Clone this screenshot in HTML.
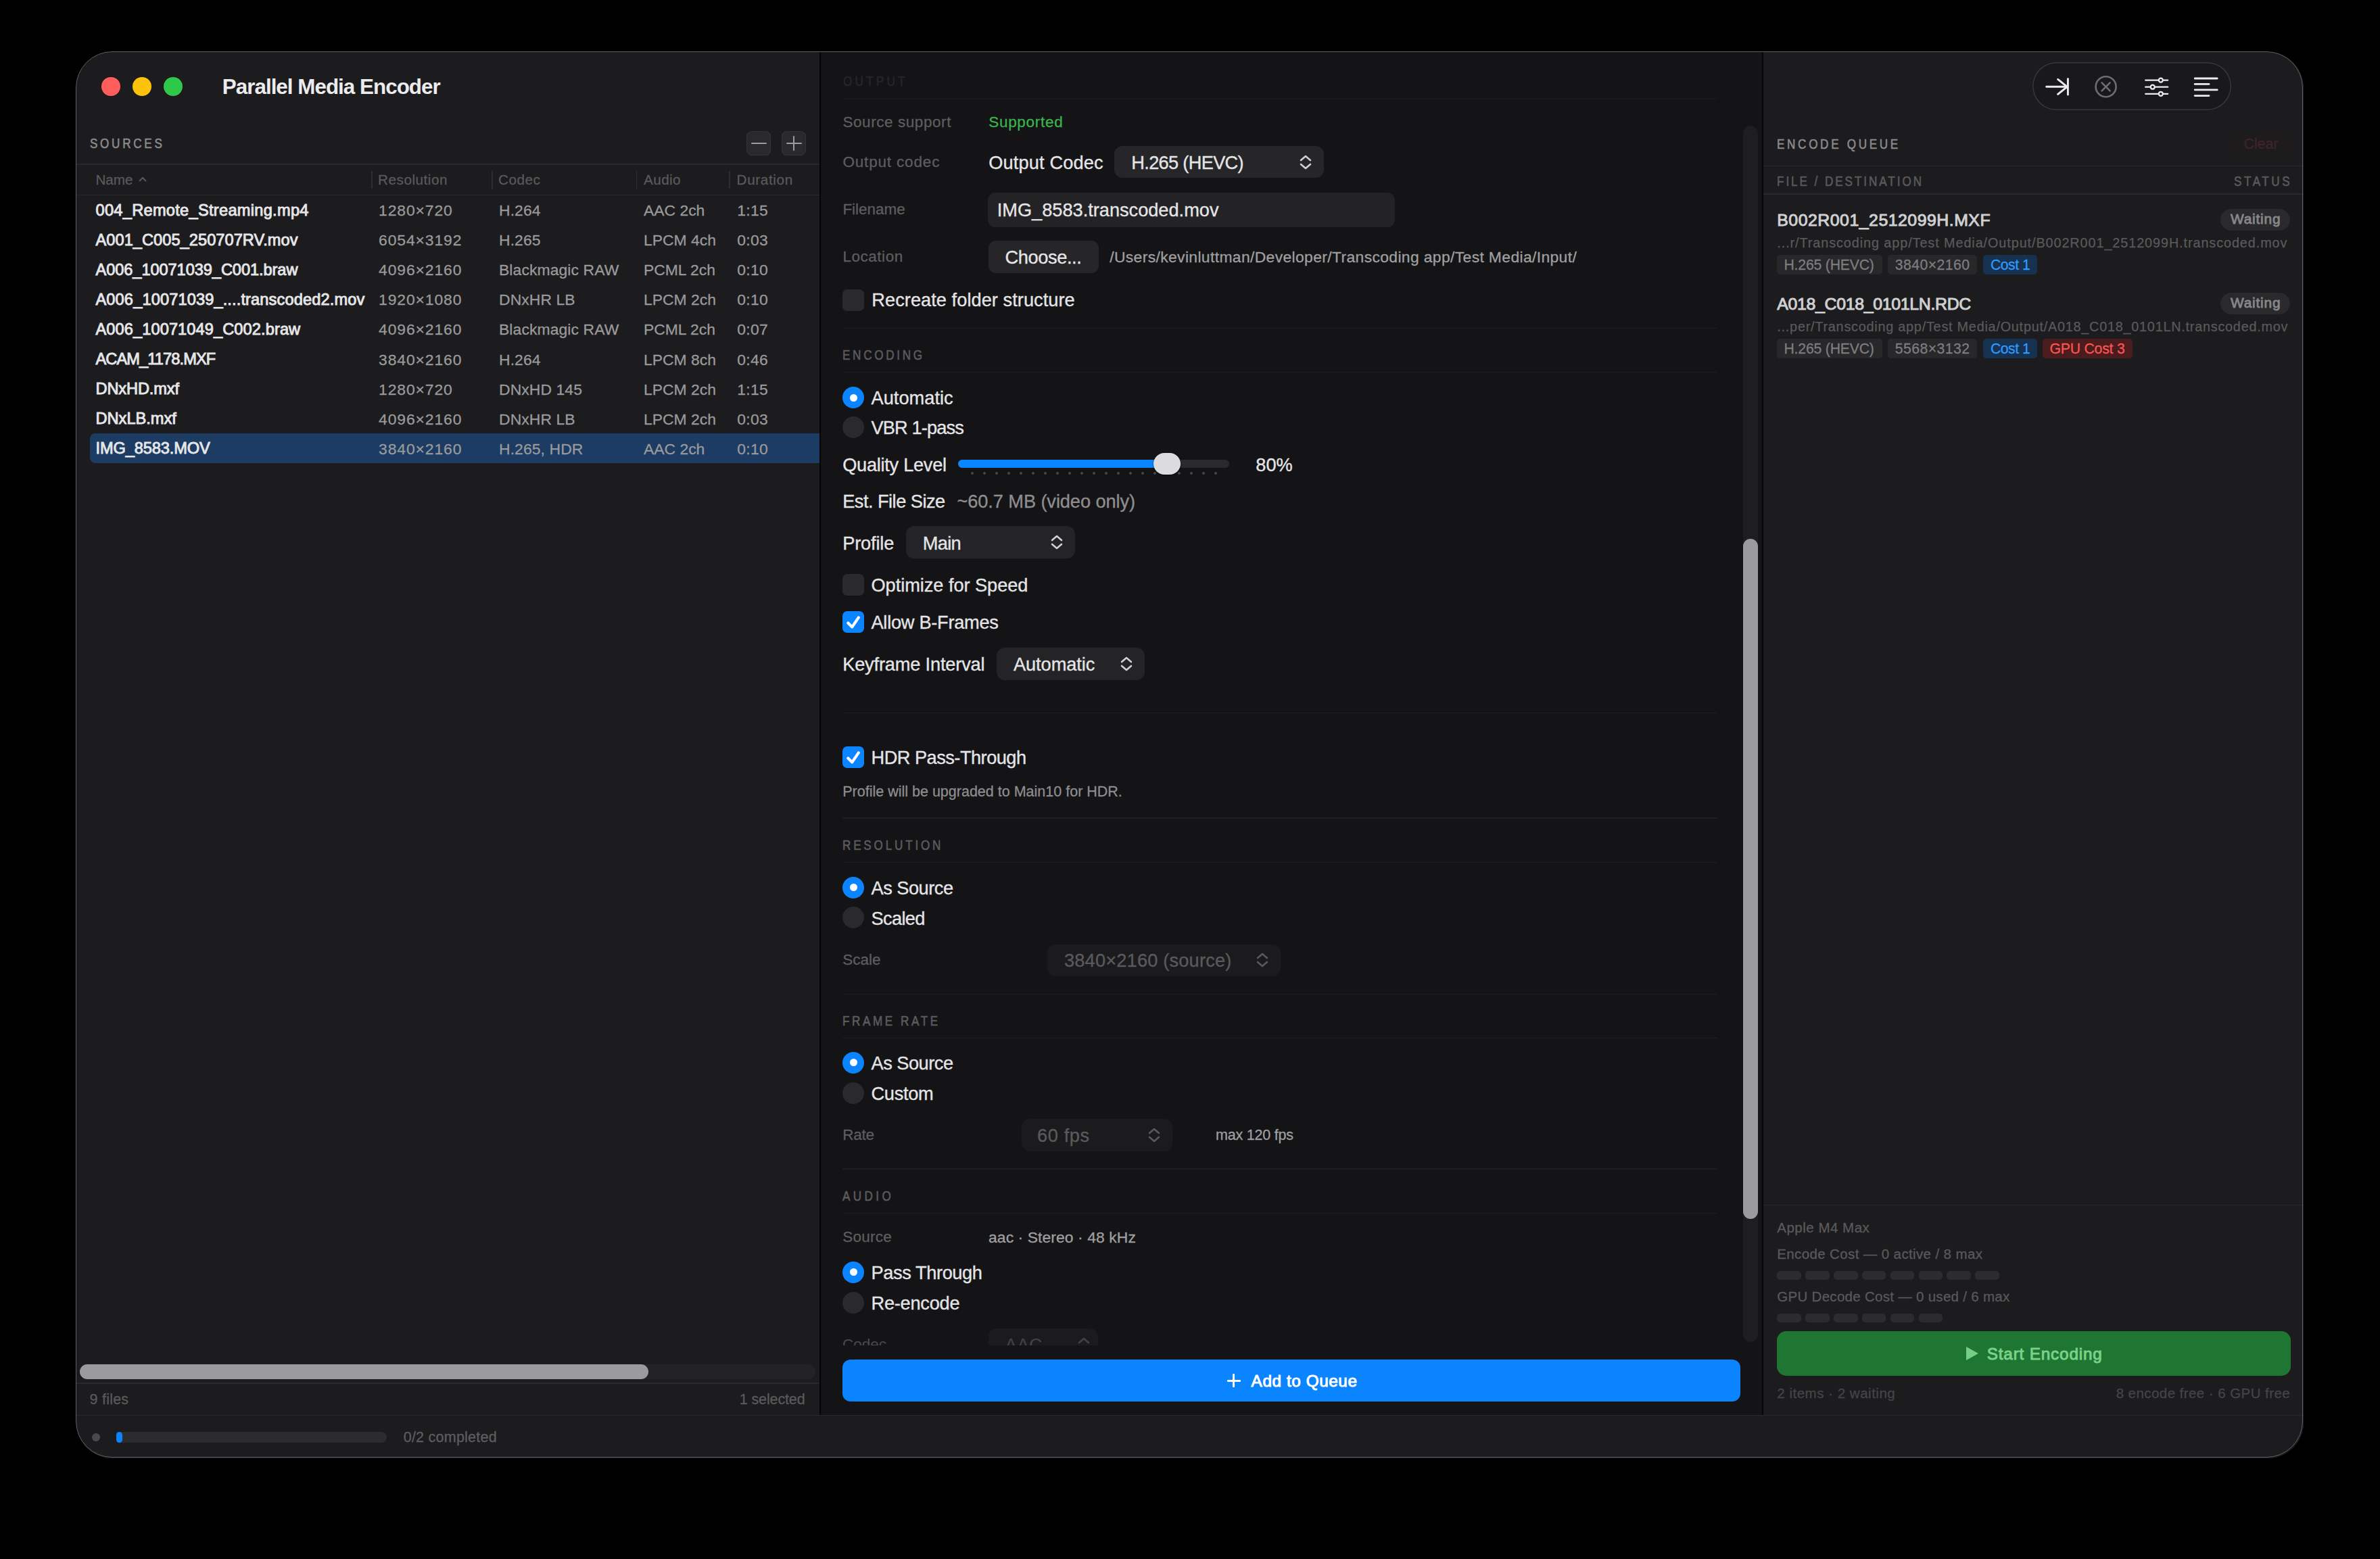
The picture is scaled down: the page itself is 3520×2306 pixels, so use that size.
<!DOCTYPE html><html><head><meta charset="utf-8"><style>
html,body{margin:0;padding:0;background:#000;}
body{width:3520px;height:2306px;position:relative;overflow:hidden;font-family:"Liberation Sans",sans-serif;}
.t{position:absolute;line-height:1;white-space:nowrap;}
.r{position:absolute;}
#win{position:absolute;left:113px;top:77px;width:3294px;height:2080px;border-radius:53px;overflow:hidden;background:#1c1c1e;}
#inner{position:absolute;left:-113px;top:-77px;width:3520px;height:2306px;}
svg{position:absolute;overflow:visible;}
</style></head><body>
<div id="win"><div id="inner">
<div class="r" style="left:113.0px;top:77.0px;width:1099.0px;height:2016.0px;background:#1c1c1e;"></div>
<div class="r" style="left:1212.0px;top:77.0px;width:2.0px;height:2016.0px;background:#050505;"></div>
<div class="r" style="left:1214.0px;top:77.0px;width:1392.0px;height:2016.0px;background:#141416;"></div>
<div class="r" style="left:2606.0px;top:77.0px;width:2.0px;height:2016.0px;background:#050505;"></div>
<div class="r" style="left:2608.0px;top:77.0px;width:799.0px;height:2016.0px;background:#1c1c1e;"></div>
<div class="r" style="left:113.0px;top:2093.0px;width:3294.0px;height:64.0px;background:#1c1c1e;"></div>
<div class="r" style="left:113.0px;top:2092.8px;width:3294.0px;height:1.5px;background:#29292b;"></div>
<div class="r" style="left:150.0px;top:114.0px;width:28.0px;height:28.0px;background:#ff5f5c;border-radius:14px;"></div>
<div class="r" style="left:196.0px;top:114.0px;width:28.0px;height:28.0px;background:#fdc20c;border-radius:14px;"></div>
<div class="r" style="left:242.0px;top:114.0px;width:28.0px;height:28.0px;background:#30c84a;border-radius:14px;"></div>
<div class="t" style="left:328.8px;top:113.0px;font-size:31.4px;color:#ececee;font-weight:bold;letter-spacing:-0.989px;">Parallel Media Encoder</div>
<div class="t" style="left:132.7px;top:202.3px;font-size:20.8px;color:#8b8b8d;-webkit-text-stroke:0.61px #8b8b8d;letter-spacing:4.563px;transform:scaleX(0.82);transform-origin:left center;">SOURCES</div>
<div class="r" style="left:1104.0px;top:194.4px;width:36.0px;height:35.3px;background:#2a2a2c;border-radius:8px;box-shadow:inset 0 0 0 1px #333336;"></div>
<div class="r" style="left:1156.0px;top:194.4px;width:36.0px;height:35.3px;background:#2a2a2c;border-radius:8px;box-shadow:inset 0 0 0 1px #333336;"></div>
<div class="r" style="left:1111.0px;top:211.0px;width:22.5px;height:2.2px;background:#9c9c9e;border-radius:1px;"></div>
<div class="r" style="left:1163.0px;top:211.0px;width:22.5px;height:2.2px;background:#9c9c9e;border-radius:1px;"></div>
<div class="r" style="left:1173.2px;top:200.8px;width:2.2px;height:22.5px;background:#9c9c9e;border-radius:1px;"></div>
<div class="r" style="left:113.0px;top:242.2px;width:1099.0px;height:1.5px;background:#29292b;"></div>
<div class="t" style="left:141.5px;top:256.4px;font-size:20.7px;color:#5a5a5c;-webkit-text-stroke:0.26px #5a5a5c;letter-spacing:-0.071px;">Name</div>
<svg style="left:204px;top:260px" width="14" height="10"><polyline points="2,8 7,3 12,8" fill="none" stroke="#5a5a5c" stroke-width="2"/></svg>
<div class="t" style="left:559.0px;top:256.4px;font-size:20.7px;color:#5a5a5c;-webkit-text-stroke:0.26px #5a5a5c;letter-spacing:0.533px;">Resolution</div>
<div class="t" style="left:737.0px;top:256.4px;font-size:20.7px;color:#5a5a5c;-webkit-text-stroke:0.26px #5a5a5c;letter-spacing:0.542px;">Codec</div>
<div class="t" style="left:952.0px;top:256.4px;font-size:20.7px;color:#5a5a5c;-webkit-text-stroke:0.26px #5a5a5c;letter-spacing:0.415px;">Audio</div>
<div class="t" style="left:1089.6px;top:256.4px;font-size:20.7px;color:#5a5a5c;-webkit-text-stroke:0.26px #5a5a5c;letter-spacing:0.623px;">Duration</div>
<div class="r" style="left:549.2px;top:252.6px;width:1.5px;height:26.4px;background:#2e2e30;"></div>
<div class="r" style="left:727.2px;top:252.6px;width:1.5px;height:26.4px;background:#2e2e30;"></div>
<div class="r" style="left:940.9px;top:252.6px;width:1.5px;height:26.4px;background:#2e2e30;"></div>
<div class="r" style="left:1078.2px;top:252.6px;width:1.5px;height:26.4px;background:#2e2e30;"></div>
<div class="r" style="left:113.0px;top:287.6px;width:1099.0px;height:1.5px;background:#29292b;"></div>
<div class="t" style="left:141.5px;top:300.1px;font-size:23.6px;color:#e6e6e8;-webkit-text-stroke:0.93px #e6e6e8;letter-spacing:0.293px;">004_Remote_Streaming.mp4</div>
<div class="t" style="left:560.0px;top:300.4px;font-size:22.9px;color:#9a9a9c;-webkit-text-stroke:0.29px #9a9a9c;letter-spacing:0.9px;">1280×720</div>
<div class="t" style="left:738.0px;top:300.4px;font-size:22.9px;color:#9a9a9c;-webkit-text-stroke:0.29px #9a9a9c;letter-spacing:0.1px;">H.264</div>
<div class="t" style="left:952.0px;top:300.4px;font-size:22.9px;color:#9a9a9c;-webkit-text-stroke:0.29px #9a9a9c;">AAC 2ch</div>
<div class="t" style="left:1090.3px;top:300.4px;font-size:22.9px;color:#9a9a9c;-webkit-text-stroke:0.29px #9a9a9c;letter-spacing:0.3px;">1:15</div>
<div class="t" style="left:141.5px;top:344.1px;font-size:23.6px;color:#e6e6e8;-webkit-text-stroke:0.93px #e6e6e8;letter-spacing:0.055px;">A001_C005_250707RV.mov</div>
<div class="t" style="left:560.0px;top:344.4px;font-size:22.9px;color:#9a9a9c;-webkit-text-stroke:0.29px #9a9a9c;letter-spacing:0.9px;">6054×3192</div>
<div class="t" style="left:738.0px;top:344.4px;font-size:22.9px;color:#9a9a9c;-webkit-text-stroke:0.29px #9a9a9c;letter-spacing:0.1px;">H.265</div>
<div class="t" style="left:952.0px;top:344.4px;font-size:22.9px;color:#9a9a9c;-webkit-text-stroke:0.29px #9a9a9c;">LPCM 4ch</div>
<div class="t" style="left:1090.3px;top:344.4px;font-size:22.9px;color:#9a9a9c;-webkit-text-stroke:0.29px #9a9a9c;letter-spacing:0.3px;">0:03</div>
<div class="t" style="left:141.5px;top:388.1px;font-size:23.6px;color:#e6e6e8;-webkit-text-stroke:0.93px #e6e6e8;letter-spacing:-0.067px;">A006_10071039_C001.braw</div>
<div class="t" style="left:560.0px;top:388.4px;font-size:22.9px;color:#9a9a9c;-webkit-text-stroke:0.29px #9a9a9c;letter-spacing:0.9px;">4096×2160</div>
<div class="t" style="left:738.0px;top:388.4px;font-size:22.9px;color:#9a9a9c;-webkit-text-stroke:0.29px #9a9a9c;letter-spacing:0.1px;">Blackmagic RAW</div>
<div class="t" style="left:952.0px;top:388.4px;font-size:22.9px;color:#9a9a9c;-webkit-text-stroke:0.29px #9a9a9c;">PCML 2ch</div>
<div class="t" style="left:1090.3px;top:388.4px;font-size:22.9px;color:#9a9a9c;-webkit-text-stroke:0.29px #9a9a9c;letter-spacing:0.3px;">0:10</div>
<div class="t" style="left:141.5px;top:432.1px;font-size:23.6px;color:#e6e6e8;-webkit-text-stroke:0.93px #e6e6e8;letter-spacing:0.131px;">A006_10071039_....transcoded2.mov</div>
<div class="t" style="left:560.0px;top:432.4px;font-size:22.9px;color:#9a9a9c;-webkit-text-stroke:0.29px #9a9a9c;letter-spacing:0.9px;">1920×1080</div>
<div class="t" style="left:738.0px;top:432.4px;font-size:22.9px;color:#9a9a9c;-webkit-text-stroke:0.29px #9a9a9c;letter-spacing:0.1px;">DNxHR LB</div>
<div class="t" style="left:952.0px;top:432.4px;font-size:22.9px;color:#9a9a9c;-webkit-text-stroke:0.29px #9a9a9c;">LPCM 2ch</div>
<div class="t" style="left:1090.3px;top:432.4px;font-size:22.9px;color:#9a9a9c;-webkit-text-stroke:0.29px #9a9a9c;letter-spacing:0.3px;">0:10</div>
<div class="t" style="left:141.5px;top:476.1px;font-size:23.6px;color:#e6e6e8;-webkit-text-stroke:0.93px #e6e6e8;letter-spacing:0.101px;">A006_10071049_C002.braw</div>
<div class="t" style="left:560.0px;top:476.4px;font-size:22.9px;color:#9a9a9c;-webkit-text-stroke:0.29px #9a9a9c;letter-spacing:0.9px;">4096×2160</div>
<div class="t" style="left:738.0px;top:476.4px;font-size:22.9px;color:#9a9a9c;-webkit-text-stroke:0.29px #9a9a9c;letter-spacing:0.1px;">Blackmagic RAW</div>
<div class="t" style="left:952.0px;top:476.4px;font-size:22.9px;color:#9a9a9c;-webkit-text-stroke:0.29px #9a9a9c;">PCML 2ch</div>
<div class="t" style="left:1090.3px;top:476.4px;font-size:22.9px;color:#9a9a9c;-webkit-text-stroke:0.29px #9a9a9c;letter-spacing:0.3px;">0:07</div>
<div class="t" style="left:141.5px;top:520.1px;font-size:23.6px;color:#e6e6e8;-webkit-text-stroke:0.93px #e6e6e8;letter-spacing:-0.894px;">ACAM_1178.MXF</div>
<div class="t" style="left:560.0px;top:520.5px;font-size:22.9px;color:#9a9a9c;-webkit-text-stroke:0.29px #9a9a9c;letter-spacing:0.9px;">3840×2160</div>
<div class="t" style="left:738.0px;top:520.5px;font-size:22.9px;color:#9a9a9c;-webkit-text-stroke:0.29px #9a9a9c;letter-spacing:0.1px;">H.264</div>
<div class="t" style="left:952.0px;top:520.5px;font-size:22.9px;color:#9a9a9c;-webkit-text-stroke:0.29px #9a9a9c;">LPCM 8ch</div>
<div class="t" style="left:1090.3px;top:520.5px;font-size:22.9px;color:#9a9a9c;-webkit-text-stroke:0.29px #9a9a9c;letter-spacing:0.3px;">0:46</div>
<div class="t" style="left:141.5px;top:564.1px;font-size:23.6px;color:#e6e6e8;-webkit-text-stroke:0.93px #e6e6e8;letter-spacing:-0.118px;">DNxHD.mxf</div>
<div class="t" style="left:560.0px;top:564.5px;font-size:22.9px;color:#9a9a9c;-webkit-text-stroke:0.29px #9a9a9c;letter-spacing:0.9px;">1280×720</div>
<div class="t" style="left:738.0px;top:564.5px;font-size:22.9px;color:#9a9a9c;-webkit-text-stroke:0.29px #9a9a9c;letter-spacing:0.1px;">DNxHD 145</div>
<div class="t" style="left:952.0px;top:564.5px;font-size:22.9px;color:#9a9a9c;-webkit-text-stroke:0.29px #9a9a9c;">LPCM 2ch</div>
<div class="t" style="left:1090.3px;top:564.5px;font-size:22.9px;color:#9a9a9c;-webkit-text-stroke:0.29px #9a9a9c;letter-spacing:0.3px;">1:15</div>
<div class="t" style="left:141.5px;top:608.1px;font-size:23.6px;color:#e6e6e8;-webkit-text-stroke:0.93px #e6e6e8;letter-spacing:0.01px;">DNxLB.mxf</div>
<div class="t" style="left:560.0px;top:608.5px;font-size:22.9px;color:#9a9a9c;-webkit-text-stroke:0.29px #9a9a9c;letter-spacing:0.9px;">4096×2160</div>
<div class="t" style="left:738.0px;top:608.5px;font-size:22.9px;color:#9a9a9c;-webkit-text-stroke:0.29px #9a9a9c;letter-spacing:0.1px;">DNxHR LB</div>
<div class="t" style="left:952.0px;top:608.5px;font-size:22.9px;color:#9a9a9c;-webkit-text-stroke:0.29px #9a9a9c;">LPCM 2ch</div>
<div class="t" style="left:1090.3px;top:608.5px;font-size:22.9px;color:#9a9a9c;-webkit-text-stroke:0.29px #9a9a9c;letter-spacing:0.3px;">0:03</div>
<div class="r" style="left:133.0px;top:641.3px;width:1079.0px;height:43.4px;background:#1c3c64;border-radius:8px;border-top-right-radius:0;border-bottom-right-radius:0;"></div>
<div class="t" style="left:141.5px;top:652.1px;font-size:23.6px;color:#e6e6e8;-webkit-text-stroke:0.93px #e6e6e8;letter-spacing:-0.109px;">IMG_8583.MOV</div>
<div class="t" style="left:560.0px;top:652.5px;font-size:22.9px;color:#9a9a9c;-webkit-text-stroke:0.29px #9a9a9c;letter-spacing:0.9px;">3840×2160</div>
<div class="t" style="left:738.0px;top:652.5px;font-size:22.9px;color:#9a9a9c;-webkit-text-stroke:0.29px #9a9a9c;letter-spacing:0.1px;">H.265, HDR</div>
<div class="t" style="left:952.0px;top:652.5px;font-size:22.9px;color:#9a9a9c;-webkit-text-stroke:0.29px #9a9a9c;">AAC 2ch</div>
<div class="t" style="left:1090.3px;top:652.5px;font-size:22.9px;color:#9a9a9c;-webkit-text-stroke:0.29px #9a9a9c;letter-spacing:0.3px;">0:10</div>
<div class="r" style="left:118.0px;top:2018.3px;width:1087.5px;height:21.6px;background:#232325;border-radius:11px;"></div>
<div class="r" style="left:118.0px;top:2018.3px;width:840.8px;height:21.6px;background:#9b9b9d;border-radius:11px;"></div>
<div class="r" style="left:113.0px;top:2045.2px;width:1099.0px;height:1.5px;background:#29292b;"></div>
<div class="t" style="left:132.6px;top:2059.9px;font-size:21.5px;color:#5a5a5c;-webkit-text-stroke:0.27px #5a5a5c;letter-spacing:0.223px;">9 files</div>
<div class="t" style="right:2329.5px;top:2059.9px;font-size:21.5px;color:#5a5a5c;-webkit-text-stroke:0.27px #5a5a5c;letter-spacing:-0.134px;">1 selected</div>
<div class="r" style="left:136.0px;top:2120.0px;width:12.0px;height:12.0px;background:#4a4a4c;border-radius:6px;"></div>
<div class="r" style="left:171.8px;top:2118.0px;width:400.0px;height:16.0px;background:#2c2c2e;border-radius:8px;"></div>
<div class="r" style="left:171.8px;top:2118.0px;width:9.2px;height:16.0px;background:#0a84ff;border-radius:8px;"></div>
<div class="t" style="left:596.7px;top:2115.9px;font-size:21.5px;color:#5e5e60;-webkit-text-stroke:0.27px #5e5e60;letter-spacing:0.246px;">0/2 completed</div>
<div class="t" style="left:1246.5px;top:110.3px;font-size:20.8px;color:#262628;-webkit-text-stroke:0.61px #262628;letter-spacing:5.216px;transform:scaleX(0.82);transform-origin:left center;">OUTPUT</div>
<div class="r" style="left:1246.0px;top:145.2px;width:1294.0px;height:1.5px;background:#19191b;"></div>
<div class="t" style="left:1246.4px;top:169.6px;font-size:22.5px;color:#5e5e60;-webkit-text-stroke:0.28px #5e5e60;letter-spacing:0.571px;">Source support</div>
<div class="t" style="left:1462.2px;top:169.6px;font-size:22.5px;color:#3ab54e;-webkit-text-stroke:0.28px #3ab54e;letter-spacing:0.71px;">Supported</div>
<div class="t" style="left:1246.4px;top:229.4px;font-size:22.5px;color:#5e5e60;-webkit-text-stroke:0.28px #5e5e60;letter-spacing:0.834px;">Output codec</div>
<div class="t" style="left:1462.2px;top:227.1px;font-size:27.2px;color:#e5e5e7;-webkit-text-stroke:0.34px #e5e5e7;letter-spacing:0.152px;">Output Codec</div>
<div class="r" style="left:1648.3px;top:216.2px;width:309.9px;height:47.2px;background:#262628;border-radius:12px;"></div>
<div class="t" style="left:1673.3px;top:227.1px;font-size:27.2px;color:#e5e5e7;-webkit-text-stroke:0.34px #e5e5e7;letter-spacing:-0.675px;">H.265 (HEVC)</div>
<svg style="left:1922.0px;top:228.0px" width="18" height="24"><polyline points="2,9 9.0,3 16,9" fill="none" stroke="#d0d0d2" stroke-width="2.6" stroke-linecap="round" stroke-linejoin="round"/><polyline points="2,15 9.0,21 16,15" fill="none" stroke="#d0d0d2" stroke-width="2.6" stroke-linecap="round" stroke-linejoin="round"/></svg>
<div class="t" style="left:1246.4px;top:299.4px;font-size:22.5px;color:#5e5e60;-webkit-text-stroke:0.28px #5e5e60;letter-spacing:-0.033px;">Filename</div>
<div class="r" style="left:1461.0px;top:285.0px;width:602.0px;height:50.7px;background:#232325;border-radius:11px;"></div>
<div class="t" style="left:1474.8px;top:297.1px;font-size:27.2px;color:#e5e5e7;-webkit-text-stroke:0.34px #e5e5e7;letter-spacing:-0.012px;">IMG_8583.transcoded.mov</div>
<div class="t" style="left:1246.4px;top:369.4px;font-size:22.5px;color:#5e5e60;-webkit-text-stroke:0.28px #5e5e60;letter-spacing:0.534px;">Location</div>
<div class="r" style="left:1462.0px;top:356.0px;width:162.6px;height:48.0px;background:#262628;border-radius:11px;"></div>
<div class="t" style="left:1486.4px;top:367.1px;font-size:27.2px;color:#e5e5e7;-webkit-text-stroke:0.34px #e5e5e7;letter-spacing:-0.364px;">Choose...</div>
<div class="t" style="left:1641.2px;top:369.2px;font-size:22.9px;color:#a0a0a2;-webkit-text-stroke:0.29px #a0a0a2;letter-spacing:0.358px;">/Users/kevinluttman/Developer/Transcoding app/Test Media/Input/</div>
<div class="r" style="left:1246.0px;top:427.5px;width:32.0px;height:32.0px;background:#2a2a2c;border-radius:7px;"></div>
<div class="t" style="left:1289.3px;top:430.1px;font-size:27.2px;color:#e5e5e7;-webkit-text-stroke:0.34px #e5e5e7;letter-spacing:0.05px;">Recreate folder structure</div>
<div class="r" style="left:1246.0px;top:484.8px;width:1294.0px;height:1.5px;background:#1e1e20;"></div>
<div class="t" style="left:1246.2px;top:515.0px;font-size:20.8px;color:#5c5c5e;-webkit-text-stroke:0.61px #5c5c5e;letter-spacing:4.544px;transform:scaleX(0.82);transform-origin:left center;">ENCODING</div>
<div class="r" style="left:1246.0px;top:549.6px;width:1294.0px;height:1.5px;background:#1e1e20;"></div>
<div class="r" style="left:1246.0px;top:572.0px;width:32.0px;height:32.0px;background:#0a84ff;border-radius:16px;"></div>
<div class="r" style="left:1256.5px;top:582.5px;width:11.0px;height:11.0px;background:#ffffff;border-radius:6px;"></div>
<div class="t" style="left:1288.5px;top:575.1px;font-size:27.2px;color:#e5e5e7;-webkit-text-stroke:0.34px #e5e5e7;letter-spacing:0.033px;">Automatic</div>
<div class="r" style="left:1246.0px;top:616.0px;width:32.0px;height:32.0px;background:#2a2a2c;border-radius:16px;"></div>
<div class="t" style="left:1288.5px;top:619.1px;font-size:27.2px;color:#e5e5e7;-webkit-text-stroke:0.34px #e5e5e7;letter-spacing:-0.858px;">VBR 1-pass</div>
<div class="t" style="left:1246.2px;top:673.7px;font-size:27.2px;color:#e5e5e7;-webkit-text-stroke:0.34px #e5e5e7;letter-spacing:-0.277px;">Quality Level</div>
<div class="r" style="left:1417.0px;top:679.8px;width:400.6px;height:12.0px;background:#2a2a2c;border-radius:6px;"></div>
<div class="r" style="left:1417.0px;top:679.8px;width:309.0px;height:12.0px;background:#0a84ff;border-radius:6px;"></div>
<div class="r" style="left:1435.8px;top:698.0px;width:4.0px;height:4.0px;background:#47474a;border-radius:2px;"></div>
<div class="r" style="left:1453.8px;top:698.0px;width:4.0px;height:4.0px;background:#47474a;border-radius:2px;"></div>
<div class="r" style="left:1471.9px;top:698.0px;width:4.0px;height:4.0px;background:#47474a;border-radius:2px;"></div>
<div class="r" style="left:1489.9px;top:698.0px;width:4.0px;height:4.0px;background:#47474a;border-radius:2px;"></div>
<div class="r" style="left:1507.9px;top:698.0px;width:4.0px;height:4.0px;background:#47474a;border-radius:2px;"></div>
<div class="r" style="left:1526.0px;top:698.0px;width:4.0px;height:4.0px;background:#47474a;border-radius:2px;"></div>
<div class="r" style="left:1544.0px;top:698.0px;width:4.0px;height:4.0px;background:#47474a;border-radius:2px;"></div>
<div class="r" style="left:1562.0px;top:698.0px;width:4.0px;height:4.0px;background:#47474a;border-radius:2px;"></div>
<div class="r" style="left:1580.0px;top:698.0px;width:4.0px;height:4.0px;background:#47474a;border-radius:2px;"></div>
<div class="r" style="left:1598.1px;top:698.0px;width:4.0px;height:4.0px;background:#47474a;border-radius:2px;"></div>
<div class="r" style="left:1616.1px;top:698.0px;width:4.0px;height:4.0px;background:#47474a;border-radius:2px;"></div>
<div class="r" style="left:1634.1px;top:698.0px;width:4.0px;height:4.0px;background:#47474a;border-radius:2px;"></div>
<div class="r" style="left:1652.2px;top:698.0px;width:4.0px;height:4.0px;background:#47474a;border-radius:2px;"></div>
<div class="r" style="left:1670.2px;top:698.0px;width:4.0px;height:4.0px;background:#47474a;border-radius:2px;"></div>
<div class="r" style="left:1688.2px;top:698.0px;width:4.0px;height:4.0px;background:#47474a;border-radius:2px;"></div>
<div class="r" style="left:1706.2px;top:698.0px;width:4.0px;height:4.0px;background:#47474a;border-radius:2px;"></div>
<div class="r" style="left:1724.3px;top:698.0px;width:4.0px;height:4.0px;background:#47474a;border-radius:2px;"></div>
<div class="r" style="left:1742.3px;top:698.0px;width:4.0px;height:4.0px;background:#47474a;border-radius:2px;"></div>
<div class="r" style="left:1760.3px;top:698.0px;width:4.0px;height:4.0px;background:#47474a;border-radius:2px;"></div>
<div class="r" style="left:1778.4px;top:698.0px;width:4.0px;height:4.0px;background:#47474a;border-radius:2px;"></div>
<div class="r" style="left:1796.4px;top:698.0px;width:4.0px;height:4.0px;background:#47474a;border-radius:2px;"></div>
<div class="r" style="left:1706.0px;top:669.8px;width:39.6px;height:32.0px;background:#dcdcde;border-radius:16px;box-shadow:0 1px 3px rgba(0,0,0,0.5);"></div>
<div class="t" style="left:1857.2px;top:673.7px;font-size:27.2px;color:#e5e5e7;-webkit-text-stroke:0.34px #e5e5e7;letter-spacing:0.081px;">80%</div>
<div class="t" style="left:1246.2px;top:727.5px;font-size:27.2px;color:#e5e5e7;-webkit-text-stroke:0.34px #e5e5e7;letter-spacing:-0.516px;">Est. File Size</div>
<div class="t" style="left:1415.5px;top:727.5px;font-size:27.2px;color:#8e8e90;-webkit-text-stroke:0.34px #8e8e90;letter-spacing:-0.086px;">~60.7 MB (video only)</div>
<div class="t" style="left:1246.2px;top:789.5px;font-size:27.2px;color:#e5e5e7;-webkit-text-stroke:0.34px #e5e5e7;letter-spacing:-0.149px;">Profile</div>
<div class="r" style="left:1340.4px;top:778.0px;width:250.1px;height:47.5px;background:#242426;border-radius:12px;"></div>
<div class="t" style="left:1364.7px;top:789.5px;font-size:27.2px;color:#e5e5e7;-webkit-text-stroke:0.34px #e5e5e7;letter-spacing:-0.651px;">Main</div>
<svg style="left:1554.0px;top:790.4px" width="18" height="24"><polyline points="2,9 9.0,3 16,9" fill="none" stroke="#d0d0d2" stroke-width="2.6" stroke-linecap="round" stroke-linejoin="round"/><polyline points="2,15 9.0,21 16,15" fill="none" stroke="#d0d0d2" stroke-width="2.6" stroke-linecap="round" stroke-linejoin="round"/></svg>
<div class="r" style="left:1246.0px;top:849.0px;width:32.0px;height:32.0px;background:#2a2a2c;border-radius:7px;"></div>
<div class="t" style="left:1288.5px;top:852.1px;font-size:27.2px;color:#e5e5e7;-webkit-text-stroke:0.34px #e5e5e7;letter-spacing:-0.047px;">Optimize for Speed</div>
<div class="r" style="left:1246.0px;top:904.0px;width:32.0px;height:32.0px;background:#0a84ff;border-radius:7px;"></div>
<svg style="left:1246px;top:904.0px" width="32" height="32"><polyline points="8.3,17.6 14.3,23.4 23.8,9.4" fill="none" stroke="#fff" stroke-width="4.2" stroke-linecap="round" stroke-linejoin="round"/></svg>
<div class="t" style="left:1288.5px;top:907.1px;font-size:27.2px;color:#e5e5e7;-webkit-text-stroke:0.34px #e5e5e7;letter-spacing:-0.264px;">Allow B-Frames</div>
<div class="t" style="left:1246.2px;top:969.1px;font-size:27.2px;color:#e5e5e7;-webkit-text-stroke:0.34px #e5e5e7;letter-spacing:-0.165px;">Keyframe Interval</div>
<div class="r" style="left:1474.3px;top:958.0px;width:219.0px;height:47.6px;background:#242426;border-radius:12px;"></div>
<div class="t" style="left:1499.0px;top:969.1px;font-size:27.2px;color:#e5e5e7;-webkit-text-stroke:0.34px #e5e5e7;letter-spacing:-0.067px;">Automatic</div>
<svg style="left:1657.0px;top:970.0px" width="18" height="24"><polyline points="2,9 9.0,3 16,9" fill="none" stroke="#d0d0d2" stroke-width="2.6" stroke-linecap="round" stroke-linejoin="round"/><polyline points="2,15 9.0,21 16,15" fill="none" stroke="#d0d0d2" stroke-width="2.6" stroke-linecap="round" stroke-linejoin="round"/></svg>
<div class="r" style="left:1246.0px;top:1053.8px;width:1294.0px;height:1.5px;background:#1e1e20;"></div>
<div class="r" style="left:1246.0px;top:1104.0px;width:32.0px;height:32.0px;background:#0a84ff;border-radius:7px;"></div>
<svg style="left:1246px;top:1104.0px" width="32" height="32"><polyline points="8.3,17.6 14.3,23.4 23.8,9.4" fill="none" stroke="#fff" stroke-width="4.2" stroke-linecap="round" stroke-linejoin="round"/></svg>
<div class="t" style="left:1288.5px;top:1107.1px;font-size:27.2px;color:#e5e5e7;-webkit-text-stroke:0.34px #e5e5e7;letter-spacing:-0.507px;">HDR Pass-Through</div>
<div class="t" style="left:1246.2px;top:1160.8px;font-size:21.5px;color:#8e8e90;-webkit-text-stroke:0.27px #8e8e90;letter-spacing:0.004px;">Profile will be upgraded to Main10 for HDR.</div>
<div class="r" style="left:1246.0px;top:1209.2px;width:1294.0px;height:1.5px;background:#1e1e20;"></div>
<div class="t" style="left:1246.2px;top:1240.0px;font-size:20.8px;color:#5c5c5e;-webkit-text-stroke:0.61px #5c5c5e;letter-spacing:4.678px;transform:scaleX(0.82);transform-origin:left center;">RESOLUTION</div>
<div class="r" style="left:1246.0px;top:1274.8px;width:1294.0px;height:1.5px;background:#1e1e20;"></div>
<div class="r" style="left:1246.0px;top:1296.8px;width:32.0px;height:32.0px;background:#0a84ff;border-radius:16px;"></div>
<div class="r" style="left:1256.5px;top:1307.3px;width:11.0px;height:11.0px;background:#ffffff;border-radius:6px;"></div>
<div class="t" style="left:1288.5px;top:1299.9px;font-size:27.2px;color:#e5e5e7;-webkit-text-stroke:0.34px #e5e5e7;letter-spacing:-0.485px;">As Source</div>
<div class="r" style="left:1246.0px;top:1341.4px;width:32.0px;height:32.0px;background:#2a2a2c;border-radius:16px;"></div>
<div class="t" style="left:1288.5px;top:1344.5px;font-size:27.2px;color:#e5e5e7;-webkit-text-stroke:0.34px #e5e5e7;letter-spacing:-0.633px;">Scaled</div>
<div class="t" style="left:1246.2px;top:1409.2px;font-size:22.5px;color:#5e5e60;-webkit-text-stroke:0.28px #5e5e60;letter-spacing:-0.02px;">Scale</div>
<div class="r" style="left:1549.4px;top:1396.7px;width:345.1px;height:46.9px;background:#1b1b1d;border-radius:12px;"></div>
<div class="t" style="left:1574.0px;top:1406.9px;font-size:27.2px;color:#5a5a5c;-webkit-text-stroke:0.34px #5a5a5c;letter-spacing:0.188px;">3840×2160 (source)</div>
<svg style="left:1857.8px;top:1407.8px" width="18" height="24"><polyline points="2,9 9.0,3 16,9" fill="none" stroke="#5a5a5c" stroke-width="2.6" stroke-linecap="round" stroke-linejoin="round"/><polyline points="2,15 9.0,21 16,15" fill="none" stroke="#5a5a5c" stroke-width="2.6" stroke-linecap="round" stroke-linejoin="round"/></svg>
<div class="r" style="left:1246.0px;top:1469.8px;width:1294.0px;height:1.5px;background:#1e1e20;"></div>
<div class="t" style="left:1246.2px;top:1499.7px;font-size:20.8px;color:#5c5c5e;-webkit-text-stroke:0.61px #5c5c5e;letter-spacing:4.41px;transform:scaleX(0.82);transform-origin:left center;">FRAME RATE</div>
<div class="r" style="left:1246.0px;top:1534.8px;width:1294.0px;height:1.5px;background:#1e1e20;"></div>
<div class="r" style="left:1246.0px;top:1555.7px;width:32.0px;height:32.0px;background:#0a84ff;border-radius:16px;"></div>
<div class="r" style="left:1256.5px;top:1566.2px;width:11.0px;height:11.0px;background:#ffffff;border-radius:6px;"></div>
<div class="t" style="left:1288.5px;top:1558.8px;font-size:27.2px;color:#e5e5e7;-webkit-text-stroke:0.34px #e5e5e7;letter-spacing:-0.485px;">As Source</div>
<div class="r" style="left:1246.0px;top:1600.7px;width:32.0px;height:32.0px;background:#2a2a2c;border-radius:16px;"></div>
<div class="t" style="left:1288.5px;top:1603.8px;font-size:27.2px;color:#e5e5e7;-webkit-text-stroke:0.34px #e5e5e7;letter-spacing:-0.282px;">Custom</div>
<div class="t" style="left:1246.2px;top:1668.2px;font-size:22.5px;color:#5e5e60;-webkit-text-stroke:0.28px #5e5e60;letter-spacing:-0.275px;">Rate</div>
<div class="r" style="left:1511.0px;top:1655.0px;width:223.0px;height:48.0px;background:#1b1b1d;border-radius:12px;"></div>
<div class="t" style="left:1534.0px;top:1665.9px;font-size:27.2px;color:#5a5a5c;-webkit-text-stroke:0.34px #5a5a5c;letter-spacing:0.622px;">60 fps</div>
<svg style="left:1698.0px;top:1666.8px" width="18" height="24"><polyline points="2,9 9.0,3 16,9" fill="none" stroke="#5a5a5c" stroke-width="2.6" stroke-linecap="round" stroke-linejoin="round"/><polyline points="2,15 9.0,21 16,15" fill="none" stroke="#5a5a5c" stroke-width="2.6" stroke-linecap="round" stroke-linejoin="round"/></svg>
<div class="t" style="left:1798.0px;top:1668.8px;font-size:21.5px;color:#a0a0a2;-webkit-text-stroke:0.27px #a0a0a2;letter-spacing:-0.221px;">max 120 fps</div>
<div class="r" style="left:1246.0px;top:1728.2px;width:1294.0px;height:1.5px;background:#1e1e20;"></div>
<div class="t" style="left:1246.2px;top:1758.9px;font-size:20.8px;color:#5c5c5e;-webkit-text-stroke:0.61px #5c5c5e;letter-spacing:5.422px;transform:scaleX(0.82);transform-origin:left center;">AUDIO</div>
<div class="r" style="left:1246.0px;top:1793.8px;width:1294.0px;height:1.5px;background:#1e1e20;"></div>
<div class="t" style="left:1246.2px;top:1818.8px;font-size:22.5px;color:#5e5e60;-webkit-text-stroke:0.28px #5e5e60;letter-spacing:0.263px;">Source</div>
<div class="t" style="left:1462.0px;top:1818.5px;font-size:22.9px;color:#a0a0a2;-webkit-text-stroke:0.29px #a0a0a2;letter-spacing:0.082px;">aac · Stereo · 48 kHz</div>
<div class="r" style="left:1246.0px;top:1865.7px;width:32.0px;height:32.0px;background:#0a84ff;border-radius:16px;"></div>
<div class="r" style="left:1256.5px;top:1876.2px;width:11.0px;height:11.0px;background:#ffffff;border-radius:6px;"></div>
<div class="t" style="left:1288.5px;top:1868.8px;font-size:27.2px;color:#e5e5e7;-webkit-text-stroke:0.34px #e5e5e7;letter-spacing:-0.394px;">Pass Through</div>
<div class="r" style="left:1246.0px;top:1910.6px;width:32.0px;height:32.0px;background:#2a2a2c;border-radius:16px;"></div>
<div class="t" style="left:1288.5px;top:1913.7px;font-size:27.2px;color:#e5e5e7;-webkit-text-stroke:0.34px #e5e5e7;letter-spacing:-0.244px;">Re-encode</div>
<div style="position:absolute;left:1214px;top:1950px;width:1360px;height:40px;overflow:hidden;">
<div class="t" style="left:32px;top:28px;font-size:22.5px;color:#4a4a4c;">Codec</div>
<div class="r" style="left:248px;top:15px;width:162px;height:47px;background:#1b1b1d;border-radius:12px;"></div>
<div class="t" style="left:272px;top:27px;font-size:27px;color:#444446;">AAC</div>
<svg style="left:380px;top:27px" width="18" height="24"><polyline points="2,9 9,3 16,9" fill="none" stroke="#444446" stroke-width="2.6" stroke-linecap="round" stroke-linejoin="round"/></svg>
</div>
<div class="r" style="left:2578.0px;top:186.0px;width:22.0px;height:1798.6px;background:#1e1e20;border-radius:11px;"></div>
<div class="r" style="left:2578.0px;top:796.8px;width:22.0px;height:1006.0px;background:#9b9b9d;border-radius:11px;"></div>
<div class="r" style="left:1246.0px;top:2011.2px;width:1328.2px;height:61.8px;background:#0a84ff;border-radius:12px;"></div>
<div class="r" style="left:1814.6px;top:2041.0px;width:20.1px;height:2.6px;background:#fff;border-radius:1px;"></div>
<div class="r" style="left:1823.4px;top:2032.2px;width:2.6px;height:20.1px;background:#fff;border-radius:1px;"></div>
<div class="t" style="left:1850.6px;top:2030.8px;font-size:24.3px;color:#ffffff;-webkit-text-stroke:0.96px #ffffff;letter-spacing:0.586px;">Add to Queue</div>
<div class="r" style="left:3006.3px;top:92.3px;width:293.3px;height:70.8px;background:#19191b;border-radius:35.4px;box-shadow:inset 0 0 0 1.5px #38383a;"></div>
<svg style="left:3000px;top:86px" width="310" height="84">
<g fill="none" stroke="#ececee" stroke-width="2.9" stroke-linecap="round" stroke-linejoin="round">
<line x1="26.7" y1="42.3" x2="57" y2="42.3"/><polyline points="43.6,31.3 57.3,42.3 43.6,53.4"/><line x1="58.4" y1="30.6" x2="58.4" y2="54"/>
</g>
<g fill="none" stroke="#6e6e70" stroke-width="2.6" stroke-linecap="round">
<circle cx="114.6" cy="42.3" r="15"/><line x1="108.6" y1="36.3" x2="120.6" y2="48.3"/><line x1="120.6" y1="36.3" x2="108.6" y2="48.3"/>
</g>
<g fill="none" stroke="#ececee" stroke-width="2.3" stroke-linecap="round">
<line x1="173.2" y1="32.6" x2="192.3" y2="32.6"/><line x1="199.3" y1="32.6" x2="206.2" y2="32.6"/><circle cx="195.8" cy="32.6" r="3"/>
<line x1="173.2" y1="42.7" x2="180.2" y2="42.7"/><line x1="187.2" y1="42.7" x2="206.2" y2="42.7"/><circle cx="183.7" cy="42.7" r="3"/>
<line x1="173.2" y1="52.8" x2="192.3" y2="52.8"/><line x1="199.3" y1="52.8" x2="206.2" y2="52.8"/><circle cx="195.8" cy="52.8" r="3"/>
</g>
<g fill="none" stroke="#ececee" stroke-width="2.8" stroke-linecap="round">
<line x1="246.2" y1="30" x2="279.2" y2="30"/><line x1="246.2" y1="38.4" x2="267" y2="38.4"/><line x1="246.2" y1="46.9" x2="279.2" y2="46.9"/><line x1="246.2" y1="55.6" x2="267" y2="55.6"/>
</g></svg>
<div class="t" style="left:2628.3px;top:203.1px;font-size:20.8px;color:#8b8b8d;-webkit-text-stroke:0.61px #8b8b8d;letter-spacing:4.527px;transform:scaleX(0.82);transform-origin:left center;">ENCODE QUEUE</div>
<div class="r" style="left:3300.0px;top:193.0px;width:88.0px;height:40.0px;background:#1e1b1d;border-radius:8px;"></div>
<div class="t" style="left:3318.5px;top:202.8px;font-size:21.5px;color:#40242a;-webkit-text-stroke:0.27px #40242a;letter-spacing:-0.094px;">Clear</div>
<div class="r" style="left:2608.0px;top:244.8px;width:799.0px;height:1.5px;background:#29292b;"></div>
<div class="t" style="left:2628.3px;top:257.5px;font-size:20.8px;color:#5a5a5c;-webkit-text-stroke:0.61px #5a5a5c;letter-spacing:3.613px;transform:scaleX(0.82);transform-origin:left center;">FILE / DESTINATION</div>
<div class="t" style="right:129.6px;top:257.5px;font-size:20.8px;color:#5a5a5c;-webkit-text-stroke:0.61px #5a5a5c;letter-spacing:4.378px;transform:scaleX(0.82);transform-origin:right center;">STATUS</div>
<div class="r" style="left:2608.0px;top:286.4px;width:799.0px;height:1.5px;background:#29292b;"></div>
<div class="t" style="left:2628.3px;top:313.5px;font-size:24.8px;color:#d0d0d2;-webkit-text-stroke:0.98px #d0d0d2;letter-spacing:0.531px;">B002R001_2512099H.MXF</div>
<div class="r" style="left:3284.0px;top:308.8px;width:103.4px;height:32.7px;background:#2a2a2c;border-radius:16.5px;"></div>
<div class="t" style="left:3299.0px;top:314.3px;font-size:20.8px;color:#88888a;-webkit-text-stroke:0.82px #88888a;letter-spacing:0.819px;">Waiting</div>
<div class="t" style="left:2628.3px;top:349.5px;font-size:19.8px;color:#5a5a5c;-webkit-text-stroke:0.25px #5a5a5c;letter-spacing:0.934px;">...r/Transcoding app/Test Media/Output/B002R001_2512099H.transcoded.mov</div>
<div class="r" style="left:2628.0px;top:376.6px;width:155.9px;height:29.0px;background:#28282a;border-radius:5px;"></div>
<div class="t" style="left:2638.5px;top:381.0px;font-size:21.2px;color:#7e7e80;-webkit-text-stroke:0.26px #7e7e80;letter-spacing:-0.189px;">H.265 (HEVC)</div>
<div class="r" style="left:2792.3px;top:376.6px;width:131.9px;height:29.0px;background:#28282a;border-radius:5px;"></div>
<div class="t" style="left:2802.8px;top:381.0px;font-size:21.2px;color:#7e7e80;-webkit-text-stroke:0.26px #7e7e80;letter-spacing:0.451px;">3840×2160</div>
<div class="r" style="left:2933.4px;top:376.6px;width:79.9px;height:29.0px;background:#173150;border-radius:5px;"></div>
<div class="t" style="left:2943.9px;top:381.0px;font-size:21.2px;color:#2f9bff;-webkit-text-stroke:0.26px #2f9bff;letter-spacing:-0.474px;">Cost 1</div>
<div class="t" style="left:2628.3px;top:437.5px;font-size:24.8px;color:#d0d0d2;-webkit-text-stroke:0.98px #d0d0d2;letter-spacing:-0.277px;">A018_C018_0101LN.RDC</div>
<div class="r" style="left:3284.0px;top:432.8px;width:103.4px;height:32.7px;background:#2a2a2c;border-radius:16.5px;"></div>
<div class="t" style="left:3299.0px;top:438.3px;font-size:20.8px;color:#88888a;-webkit-text-stroke:0.82px #88888a;letter-spacing:0.819px;">Waiting</div>
<div class="t" style="left:2628.3px;top:473.5px;font-size:19.8px;color:#5a5a5c;-webkit-text-stroke:0.25px #5a5a5c;letter-spacing:0.78px;">...per/Transcoding app/Test Media/Output/A018_C018_0101LN.transcoded.mov</div>
<div class="r" style="left:2628.0px;top:500.6px;width:155.9px;height:29.0px;background:#28282a;border-radius:5px;"></div>
<div class="t" style="left:2638.5px;top:505.0px;font-size:21.2px;color:#7e7e80;-webkit-text-stroke:0.26px #7e7e80;letter-spacing:-0.189px;">H.265 (HEVC)</div>
<div class="r" style="left:2792.3px;top:500.6px;width:131.9px;height:29.0px;background:#28282a;border-radius:5px;"></div>
<div class="t" style="left:2802.8px;top:505.0px;font-size:21.2px;color:#7e7e80;-webkit-text-stroke:0.26px #7e7e80;letter-spacing:0.451px;">5568×3132</div>
<div class="r" style="left:2933.4px;top:500.6px;width:79.9px;height:29.0px;background:#173150;border-radius:5px;"></div>
<div class="t" style="left:2943.9px;top:505.0px;font-size:21.2px;color:#2f9bff;-webkit-text-stroke:0.26px #2f9bff;letter-spacing:-0.474px;">Cost 1</div>
<div class="r" style="left:3021.0px;top:500.6px;width:132.8px;height:29.0px;background:#4a1c1e;border-radius:5px;"></div>
<div class="t" style="left:3031.5px;top:505.0px;font-size:21.2px;color:#ff5550;-webkit-text-stroke:0.26px #ff5550;letter-spacing:-0.2px;">GPU Cost 3</div>
<div class="r" style="left:2608.0px;top:1781.7px;width:799.0px;height:1.5px;background:#29292b;"></div>
<div class="t" style="left:2628.3px;top:1806.2px;font-size:20.5px;color:#5a5a5c;-webkit-text-stroke:0.26px #5a5a5c;letter-spacing:0.498px;">Apple M4 Max</div>
<div class="t" style="left:2628.3px;top:1844.5px;font-size:20.5px;color:#5a5a5c;-webkit-text-stroke:0.26px #5a5a5c;letter-spacing:0.372px;">Encode Cost — 0 active / 8 max</div>
<div class="r" style="left:2628.3px;top:1879.6px;width:35.5px;height:13.1px;background:#2c2c2e;border-radius:5px;"></div>
<div class="r" style="left:2670.2px;top:1879.6px;width:35.5px;height:13.1px;background:#2c2c2e;border-radius:5px;"></div>
<div class="r" style="left:2712.0px;top:1879.6px;width:35.5px;height:13.1px;background:#2c2c2e;border-radius:5px;"></div>
<div class="r" style="left:2753.9px;top:1879.6px;width:35.5px;height:13.1px;background:#2c2c2e;border-radius:5px;"></div>
<div class="r" style="left:2795.7px;top:1879.6px;width:35.5px;height:13.1px;background:#2c2c2e;border-radius:5px;"></div>
<div class="r" style="left:2837.6px;top:1879.6px;width:35.5px;height:13.1px;background:#2c2c2e;border-radius:5px;"></div>
<div class="r" style="left:2879.4px;top:1879.6px;width:35.5px;height:13.1px;background:#2c2c2e;border-radius:5px;"></div>
<div class="r" style="left:2921.2px;top:1879.6px;width:35.5px;height:13.1px;background:#2c2c2e;border-radius:5px;"></div>
<div class="t" style="left:2628.3px;top:1908.2px;font-size:20.5px;color:#5a5a5c;-webkit-text-stroke:0.26px #5a5a5c;letter-spacing:0.288px;">GPU Decode Cost — 0 used / 6 max</div>
<div class="r" style="left:2628.3px;top:1943.3px;width:35.5px;height:13.1px;background:#2c2c2e;border-radius:5px;"></div>
<div class="r" style="left:2670.2px;top:1943.3px;width:35.5px;height:13.1px;background:#2c2c2e;border-radius:5px;"></div>
<div class="r" style="left:2712.0px;top:1943.3px;width:35.5px;height:13.1px;background:#2c2c2e;border-radius:5px;"></div>
<div class="r" style="left:2753.9px;top:1943.3px;width:35.5px;height:13.1px;background:#2c2c2e;border-radius:5px;"></div>
<div class="r" style="left:2795.7px;top:1943.3px;width:35.5px;height:13.1px;background:#2c2c2e;border-radius:5px;"></div>
<div class="r" style="left:2837.6px;top:1943.3px;width:35.5px;height:13.1px;background:#2c2c2e;border-radius:5px;"></div>
<div class="r" style="left:2628.3px;top:1969.2px;width:759.7px;height:65.4px;background:#1f7532;border-radius:14px;"></div>
<svg style="left:2906px;top:1990px" width="22" height="24"><polygon points="2,2 20,12 2,22" fill="#74d084"/></svg>
<div class="t" style="left:2938.7px;top:1990.5px;font-size:24.3px;color:#78d488;-webkit-text-stroke:0.96px #78d488;letter-spacing:0.832px;">Start Encoding</div>
<div class="t" style="left:2628.3px;top:2050.9px;font-size:20.5px;color:#454547;-webkit-text-stroke:0.26px #454547;letter-spacing:0.512px;">2 items · 2 waiting</div>
<div class="t" style="right:132.9px;top:2050.9px;font-size:20.5px;color:#454547;-webkit-text-stroke:0.26px #454547;letter-spacing:0.436px;">8 encode free · 6 GPU free</div>
</div></div>
<div style="position:absolute;left:112px;top:76px;width:3292px;height:2078px;border:1.6px solid #606062;border-radius:54px;pointer-events:none;"></div>
</body></html>
